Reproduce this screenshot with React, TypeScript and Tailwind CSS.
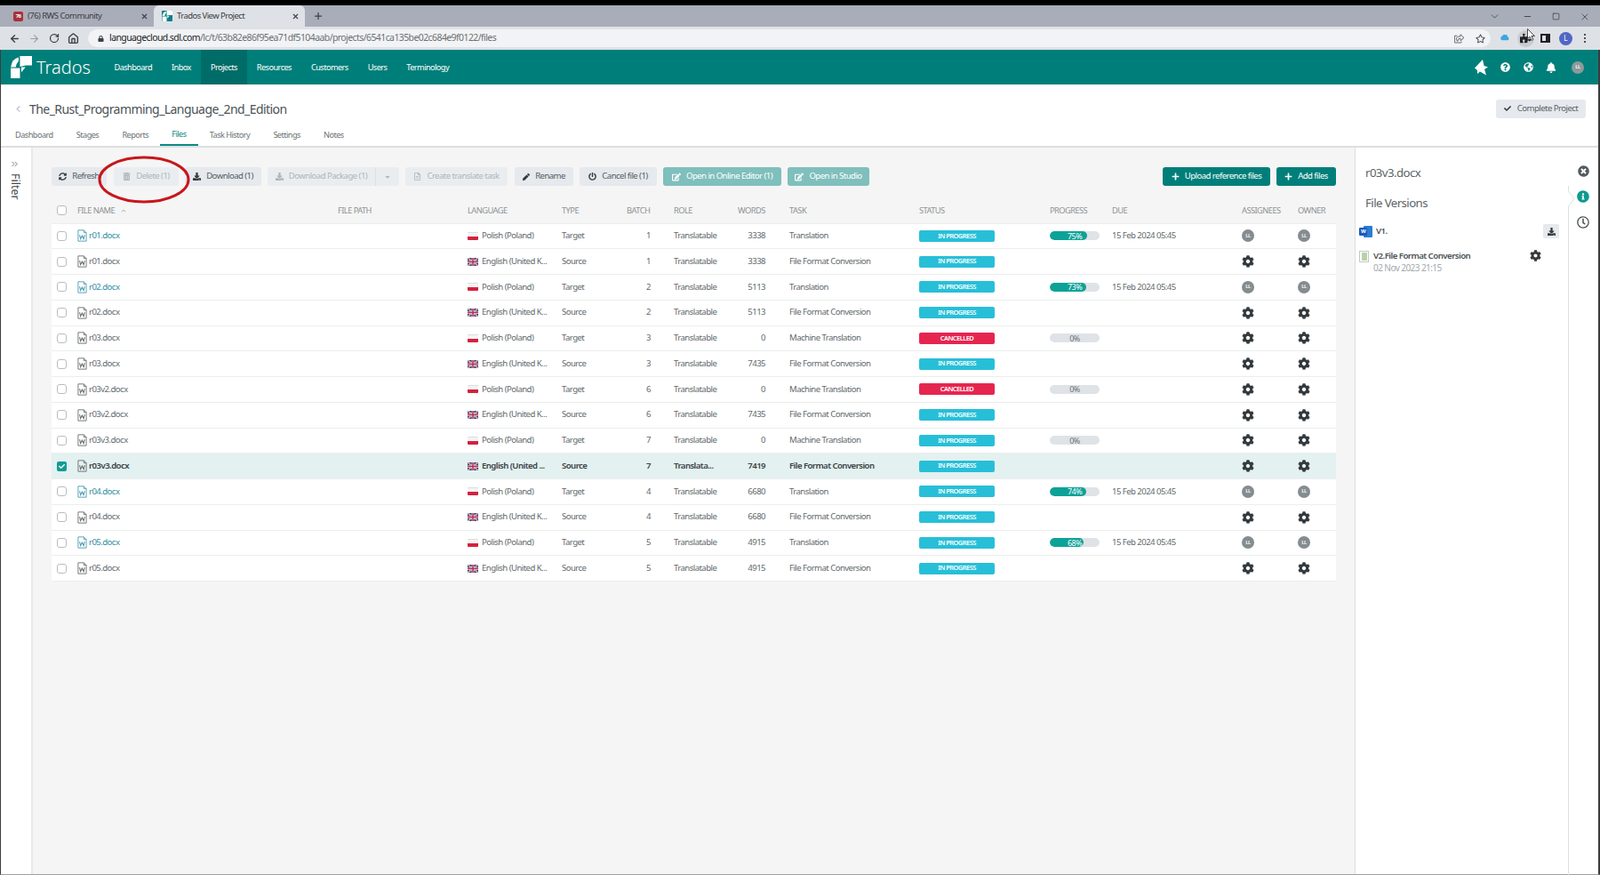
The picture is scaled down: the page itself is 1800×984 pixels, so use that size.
import { ReactNode } from "react";
import {
  FaBell,
  FaCheck,
  FaCog,
  FaDownload,
  FaEdit,
  FaGlobeAmericas,
  FaInfoCircle,
  FaLock,
  FaPen,
  FaPlus,
  FaPowerOff,
  FaPuzzlePiece,
  FaQuestionCircle,
  FaRegClock,
  FaRegFileAlt,
  FaRegShareSquare,
  FaRegStar,
  FaSyncAlt,
  FaTimesCircle,
  FaTrashAlt,
  FaCaretDown,
} from "react-icons/fa";
import { ArrowLeft, ArrowRight, ChevronDown, ChevronLeft, ChevronsRight, ChevronUp, Home, Minus, Plus, RotateCw, Square, X } from "lucide-react";

type FileRow = {
  name: string;
  link?: boolean;
  target: boolean;
  batch: number;
  words: number;
  task: string;
  status: "IN PROGRESS" | "CANCELLED";
  progress?: number;
  due?: boolean;
  user?: boolean;
  selected?: boolean;
};

const rows: FileRow[] = [
  { name: "r01.docx", link: true, target: true, batch: 1, words: 3338, task: "Translation", status: "IN PROGRESS", progress: 75, due: true, user: true },
  { name: "r01.docx", target: false, batch: 1, words: 3338, task: "File Format Conversion", status: "IN PROGRESS" },
  { name: "r02.docx", link: true, target: true, batch: 2, words: 5113, task: "Translation", status: "IN PROGRESS", progress: 73, due: true, user: true },
  { name: "r02.docx", target: false, batch: 2, words: 5113, task: "File Format Conversion", status: "IN PROGRESS" },
  { name: "r03.docx", target: true, batch: 3, words: 0, task: "Machine Translation", status: "CANCELLED", progress: 0 },
  { name: "r03.docx", target: false, batch: 3, words: 7435, task: "File Format Conversion", status: "IN PROGRESS" },
  { name: "r03v2.docx", target: true, batch: 6, words: 0, task: "Machine Translation", status: "CANCELLED", progress: 0 },
  { name: "r03v2.docx", target: false, batch: 6, words: 7435, task: "File Format Conversion", status: "IN PROGRESS" },
  { name: "r03v3.docx", target: true, batch: 7, words: 0, task: "Machine Translation", status: "IN PROGRESS", progress: 0 },
  { name: "r03v3.docx", target: false, batch: 7, words: 7419, task: "File Format Conversion", status: "IN PROGRESS", selected: true },
  { name: "r04.docx", link: true, target: true, batch: 4, words: 6680, task: "Translation", status: "IN PROGRESS", progress: 74, due: true, user: true },
  { name: "r04.docx", target: false, batch: 4, words: 6680, task: "File Format Conversion", status: "IN PROGRESS" },
  { name: "r05.docx", link: true, target: true, batch: 5, words: 4915, task: "Translation", status: "IN PROGRESS", progress: 68, due: true, user: true },
  { name: "r05.docx", target: false, batch: 5, words: 4915, task: "File Format Conversion", status: "IN PROGRESS" },
];

const gridCols =
  "grid grid-cols-[29px_293px_146px_106px_73px_53px_72px_58px_146px_147px_70px_146px_63px_43px] items-center";

function TradosMark({ className }: { className?: string }) {
  return (
    <svg viewBox="0 0 24 24" className={className} fill="white">
      <path d="M11 0H24V10H17.5L11 11.5z" />
      <path d="M1 12L3 5.5Q6 2.5 9.5 1.5V5.5Q7 8 6.5 12z" />
      <path d="M1 13H11V24H1z" />
      <path d="M12.5 12H17L12.5 17.5z" />
    </svg>
  );
}

function WordFileIcon({ color }: { color: string }) {
  return (
    <svg viewBox="0 0 12 15" className="h-[14px] w-[11px] shrink-0" fill="none" stroke={color} strokeWidth="1">
      <path d="M1 .8h7l3 3v10.4H1z" />
      <path d="M8 .8v3h3" />
      <path d="M2.8 6.5 4 11.5l1.9-4 1.9 4 1.2-5" strokeWidth="1.1" />
    </svg>
  );
}

function PolishFlag() {
  return (
    <span className="flex h-[9px] w-[12px] shrink-0 flex-col overflow-hidden rounded-[1px] border-t border-[#ddd]">
      <span className="h-1/2 bg-[#f4f4f4]" />
      <span className="h-1/2 bg-[#d4213d]" />
    </span>
  );
}

function UkFlag() {
  return (
    <svg viewBox="0 0 24 18" className="h-[9px] w-[12px] shrink-0 rounded-[1px]">
      <rect width="24" height="18" fill="#27356f" />
      <path d="M0 0l24 18M24 0L0 18" stroke="#e8e0e8" strokeWidth="3.5" />
      <path d="M0 0l24 18M24 0L0 18" stroke="#b3304d" strokeWidth="1.2" />
      <path d="M12 0v18M0 9h24" stroke="#e8e0e8" strokeWidth="5.5" />
      <path d="M12 0v18M0 9h24" stroke="#b3304d" strokeWidth="3" />
    </svg>
  );
}

function Avatar() {
  return (
    <span className="flex h-[14px] w-[14px] items-center justify-center rounded-full bg-[#848c8f] text-[6px] font-semibold text-white">
      LL
    </span>
  );
}

function ToolButton({
  icon,
  label,
  className,
}: {
  icon: ReactNode;
  label: string;
  className: string;
}) {
  return (
    <div className={`flex h-[21px] items-center justify-center gap-[6px] rounded-[3px] text-[9.6px] ${className}`}>
      {icon}
      <span>{label}</span>
    </div>
  );
}

function Row({ row }: { row: FileRow }) {
  const textColor = row.selected ? "text-[#3b4245] font-semibold" : "text-[#636a6d]";
  return (
    <div
      className={`${gridCols} h-[28.75px] border-b border-[#eceeee] text-[9.6px] ${textColor} ${
        row.selected ? "bg-[#e3f1f0]" : "bg-white"
      }`}
    >
      <div className="pl-[6px]">
        {row.selected ? (
          <span className="flex h-[11px] w-[11px] items-center justify-center rounded-[2px] bg-[#0d9d94]">
            <FaCheck className="text-[7px] text-white" />
          </span>
        ) : (
          <span className="block h-[11px] w-[11px] rounded-[3px] border border-[#b9bdbf] bg-white" />
        )}
      </div>
      <div className="flex items-center gap-[2px]">
        <WordFileIcon color={row.link ? "#4d9fb4" : "#6b6f72"} />
        <span className={row.link ? "text-[#2f8ea3]" : ""}>{row.name}</span>
      </div>
      <div />
      <div className="flex items-center gap-[4px]">
        {row.target ? <PolishFlag /> : <UkFlag />}
        <span className="whitespace-nowrap">
          {row.target ? "Polish (Poland)" : row.selected ? "English (United ..." : "English (United K..."}
        </span>
      </div>
      <div>{row.target ? "Target" : "Source"}</div>
      <div className="pr-[26px] text-right">{row.batch}</div>
      <div>{row.selected ? "Translata..." : "Translatable"}</div>
      <div className="pr-[27px] text-right">{row.words}</div>
      <div>{row.task}</div>
      <div>
        <span
          className={`flex h-[13px] w-[85px] items-center justify-center rounded-[2px] text-[7.5px] font-semibold leading-none text-white ${
            row.status === "CANCELLED" ? "bg-[#e6254f]" : "bg-[#27bfd8]"
          }`}
        >
          {row.status}
        </span>
      </div>
      <div>
        {row.progress !== undefined && (
          <div className="relative h-[10px] w-[56px] overflow-hidden rounded-full bg-[#dfe3e7]">
            <div className="absolute inset-y-0 left-0 rounded-full bg-[#0ca297]" style={{ width: `${row.progress}%` }} />
            <span
              className={`absolute inset-0 flex items-center justify-center text-[9px] leading-none ${
                row.progress ? "text-white" : "text-[#6c7376]"
              }`}
            >
              {row.progress}%
            </span>
          </div>
        )}
      </div>
      <div>{row.due ? "15 Feb 2024 05:45" : ""}</div>
      <div>{row.user ? <Avatar /> : <FaCog className="text-[14px] text-[#33393c]" />}</div>
      <div>{row.user ? <Avatar /> : <FaCog className="text-[14px] text-[#33393c]" />}</div>
    </div>
  );
}

function ChromeBar() {
  return (
    <div className="shrink-0">
      <div className="h-[6px] bg-black" />
      <div className="flex h-[24px] items-end bg-[#a9adb9] pl-[3px] text-[9.5px] text-[#3c4043]">
        <div className="flex h-[24px] w-[170px] items-center rounded-t-[6px] pl-[12px]">
          <span className="mr-[5px] flex h-[11px] w-[11px] items-center justify-center rounded-[2px] bg-[#a8303a] text-[6px] font-bold text-white">
            76
          </span>
          <span className="flex-1">(76) RWS Community</span>
          <X className="mr-[6px] h-[9px] w-[9px]" strokeWidth={3} />
        </div>
        <div className="flex h-[24px] w-[170px] items-center rounded-t-[6px] bg-[#dee1e6] pl-[9px]">
          <TradosMark className="mr-[5px] h-[12px] w-[12px] rounded-[1px] bg-[#0a7f86]" />
          <span className="flex-1">Trados View Project</span>
          <X className="mr-[6px] h-[9px] w-[9px]" strokeWidth={3} />
        </div>
        <Plus className="mb-[6px] ml-[9px] h-[12px] w-[12px]" strokeWidth={2.5} />
        <div className="ml-auto mb-[5px] flex items-center text-[#3c4043]">
          <ChevronDown className="mr-[25px] h-[13px] w-[13px]" strokeWidth={1.5} />
          <Minus className="mr-[22px] h-[11px] w-[11px]" strokeWidth={2} />
          <Square className="mr-[22px] h-[9px] w-[9px]" strokeWidth={2} />
          <X className="mr-[11px] h-[12px] w-[12px]" strokeWidth={1.5} />
        </div>
      </div>
      <div className="flex h-[26px] items-center bg-[#dee1e6] pl-[10px] text-[#3c4043]">
        <ArrowLeft className="h-[13px] w-[13px]" strokeWidth={2.5} />
        <ArrowRight className="ml-[9px] h-[13px] w-[13px] text-[#9aa0a6]" strokeWidth={2} />
        <RotateCw className="ml-[10px] h-[12px] w-[12px]" strokeWidth={2.5} />
        <Home className="ml-[9px] h-[13px] w-[13px]" strokeWidth={2.5} />
        <div className="ml-[10px] flex h-[20px] w-[1578px] items-center rounded-full bg-[#f1f3f4] pl-[11px] pr-[6px] text-[10.45px]">
          <FaLock className="mr-[6px] text-[7px]" />
          <span className="text-[#202124]">languagecloud.sdl.com</span>
          <span className="text-[#6c7073]">/lc/t/63b82e86f95ea71df5104aab/projects/6541ca135be02c684e9f0122/files</span>
          <FaRegShareSquare className="ml-auto mr-[13px] text-[11px] text-[#6c7073]" />
          <FaRegStar className="text-[11px]" />
        </div>
        <svg viewBox="0 0 14 10" className="ml-[10px] h-[9px] w-[12px]" fill="#3ea6e0">
          <path d="M3 7a3 3 0 0 1 .6-5.6A4 4 0 0 1 11 3a2.2 2.2 0 0 1 0 4z" />
        </svg>
        <div className="ml-[7.5px] flex h-[19px] w-[19px] items-center justify-center rounded-full bg-[#c9ccd1]">
          <FaPuzzlePiece className="text-[12px] text-[#202124]" />
        </div>
        <div className="ml-[7px] h-[10px] w-[11px] border-[2px] border-r-[5px] border-[#202124]" />
        <div className="ml-[10px] flex h-[15px] w-[15px] items-center justify-center rounded-full bg-[#5166c4] text-[8px] text-white">
          L
        </div>
        <div className="ml-[13.5px] flex flex-col gap-[2px]">
          <span className="h-[2px] w-[2px] rounded-full bg-[#202124]" />
          <span className="h-[2px] w-[2px] rounded-full bg-[#202124]" />
          <span className="h-[2px] w-[2px] rounded-full bg-[#202124]" />
        </div>
      </div>
    </div>
  );
}

function TopNav() {
  const items = ["Dashboard", "Inbox", "Projects", "Resources", "Customers", "Users", "Terminology"];
  return (
    <div className="flex h-[39px] shrink-0 items-center bg-[#007f7a] pl-[10px] text-white">
      <TradosMark className="h-[25px] w-[25px]" />
      <span className="ml-[5px] text-[20px] font-light leading-none tracking-normal">Trados</span>
      <div className="ml-[15.5px] flex h-full items-center text-[9.2px]">
        {items.map((item) => (
          <div
            key={item}
            className={`flex h-full items-center px-[11px] ${item === "Projects" ? "bg-[#006c68]" : ""}`}
          >
            {item}
          </div>
        ))}
      </div>
      <div className="ml-auto mr-[16px] flex items-center">
        <svg viewBox="0 0 15 18" className="h-[18px] w-[15px]" fill="white">
          <path d="M9 0l1.5 7 4.5 1.5L11 11l2 6.5-7-4-3 2.5v-4L0 9.5z" />
        </svg>
        <FaQuestionCircle className="ml-[14px] text-[11px]" />
        <FaGlobeAmericas className="ml-[15px] text-[11px]" />
        <FaBell className="ml-[14.5px] text-[12px]" />
        <span className="ml-[17px] flex h-[14px] w-[14px] items-center justify-center rounded-full bg-[#8b9a9b] text-[6px] font-semibold">
          LL
        </span>
      </div>
    </div>
  );
}

function ProjectHeader() {
  const tabs = ["Dashboard", "Stages", "Reports", "Files", "Task History", "Settings", "Notes"];
  return (
    <div className="h-[71px] shrink-0 border-b-2 border-[#dcdfe0] bg-white">
      <div className="flex h-[45px] items-center pl-[14px] pr-[14px] pt-[9px]">
        <ChevronLeft className="h-[11px] w-[11px] text-[#5d6366]" strokeWidth={1.5} />
        <span className="ml-[7px] text-[14px] text-[#4b5255]">The_Rust_Programming_Language_2nd_Edition</span>
        <div className="ml-auto flex h-[21px] w-[101px] items-center justify-center gap-[7px] rounded-[3px] bg-[#e6e9ed] text-[9.6px] text-[#5a6164]">
          <FaCheck className="text-[8px] text-[#33393c]" />
          Complete Project
        </div>
      </div>
      <div className="flex h-[24px] items-stretch pl-[3px] text-[9.2px] text-[#6b7275]">
        {tabs.map((tab) => (
          <div
            key={tab}
            className={`flex items-center px-[13.1px] ${tab === "Files" ? "border-b-2 border-[#0a8a84] text-[#0a8a84]" : ""}`}
          >
            {tab}
          </div>
        ))}
      </div>
    </div>
  );
}

function Toolbar() {
  const off = "bg-[#eaedf0] text-[#b0b5b8]";
  const on = "bg-[#e6e9ed] text-[#555c60]";
  const teal = "bg-[#7fbfbc] text-white";
  const strong = "bg-[#007f7a] text-white";
  return (
    <div className="flex items-center pt-[22px]">
      <ToolButton className={`${on} mr-[8px] w-[62px]`} icon={<FaSyncAlt className="text-[9px] text-[#33393c]" />} label="Refresh" />
      <ToolButton className={`${off} mr-[7px] w-[73px]`} icon={<FaTrashAlt className="text-[9px]" />} label="Delete (1)" />
      <ToolButton className={`${on} mr-[7px] w-[86px]`} icon={<FaDownload className="text-[9px] text-[#33393c]" />} label="Download (1)" />
      <div className={`mr-[7px] flex h-[21px] w-[148px] items-center rounded-[3px] text-[9.6px] ${off}`}>
        <div className="flex h-full flex-1 items-center justify-center gap-[6px] border-r border-[#dde0e3]">
          <FaDownload className="text-[9px]" />
          Download Package (1)
        </div>
        <FaCaretDown className="mx-[9px] text-[8px]" />
      </div>
      <ToolButton className={`${off} mr-[8px] w-[115px]`} icon={<FaRegFileAlt className="text-[9px]" />} label="Create translate task" />
      <ToolButton className={`${on} mr-[7px] w-[66px]`} icon={<FaPen className="text-[8px] text-[#33393c]" />} label="Rename" />
      <ToolButton className={`${on} mr-[7px] w-[87px]`} icon={<FaPowerOff className="text-[9px] text-[#33393c]" />} label="Cancel file (1)" />
      <ToolButton className={`${teal} mr-[7px] w-[133px]`} icon={<FaEdit className="text-[10px]" />} label="Open in Online Editor (1)" />
      <ToolButton className={`${teal} w-[92px]`} icon={<FaEdit className="text-[10px]" />} label="Open in Studio" />
      <ToolButton className={`${strong} ml-auto mr-[7px] w-[121px]`} icon={<FaPlus className="text-[9px]" />} label="Upload reference files" />
      <ToolButton className={`${strong} w-[67px]`} icon={<FaPlus className="text-[9px]" />} label="Add files" />
    </div>
  );
}

function FileTable() {
  return (
    <div className="mt-[13.5px]">
      <div className={`${gridCols} h-[28px] text-[9.3px] text-[#8d9395]`}>
        <div className="pl-[6px]">
          <span className="block h-[11px] w-[11px] rounded-[3px] border border-[#b9bdbf] bg-white" />
        </div>
        <div className="flex items-center gap-[6px]">
          FILE NAME <ChevronUp className="h-[8px] w-[8px]" strokeWidth={2} />
        </div>
        <div>FILE PATH</div>
        <div>LANGUAGE</div>
        <div>TYPE</div>
        <div>BATCH</div>
        <div>ROLE</div>
        <div>WORDS</div>
        <div>TASK</div>
        <div>STATUS</div>
        <div>PROGRESS</div>
        <div>DUE</div>
        <div>ASSIGNEES</div>
        <div>OWNER</div>
      </div>
      <div className="border-t border-[#eceeee]">
        {rows.map((row, i) => (
          <Row key={i} row={row} />
        ))}
      </div>
    </div>
  );
}

function DetailsPanel() {
  return (
    <aside className="flex w-[274px] shrink-0 border-l border-[#dcdfe0] bg-white">
      <div className="w-[239px]">
        <div className="pl-[11px] pt-[19px] text-[13.2px] leading-[18px] text-[#5c6366]">r03v3.docx</div>
        <div className="pl-[11px] pt-[16px] text-[13.2px] leading-[18px] text-[#5c6366]">File Versions</div>
        <div className="mt-[15.5px] flex h-[15px] items-center pl-[4px] pr-[10px]">
          <span className="relative h-[13px] w-[15px] shrink-0">
            <span className="absolute inset-y-0 left-[5px] right-0 rounded-[1px] bg-[#2b7cd3]" />
            <span className="absolute left-0 top-[2px] flex h-[9px] w-[9px] items-center justify-center rounded-[1px] bg-[#185abd] text-[6px] font-bold leading-none text-white">
              W
            </span>
          </span>
          <span className="ml-[4px] text-[9.6px] font-semibold text-[#4b5255]">V1.</span>
          <span className="ml-auto flex h-[16px] w-[18px] items-center justify-center rounded-[2px] bg-[#e6e9ed]">
            <FaDownload className="text-[9px] text-[#33393c]" />
          </span>
        </div>
        <div className="mt-[13px] flex items-start pl-[4px] pr-[30px]">
          <span className="mt-[1px] flex h-[13px] w-[11px] items-center justify-center border border-[#c3c7c9] bg-white">
            <span className="h-[9px] w-[6px] bg-[#b7d3a6]" />
          </span>
          <div className="ml-[5px]">
            <div className="text-[9.7px] font-semibold leading-[13px] text-[#4b5255]">V2.File Format Conversion</div>
            <div className="mt-[1px] text-[10px] leading-[13px] text-[#a4a9ab]">02 Nov 2023 21:15</div>
          </div>
          <FaCog className="ml-auto text-[13px] text-[#33393c]" />
        </div>
      </div>
      <div className="relative flex flex-1 flex-col items-center gap-[15px] pt-[20px]">
        <svg className="absolute left-0 top-[43px] h-[800px] w-[8px]" viewBox="0 0 8 800" fill="none" stroke="#dcdfe0">
          <path d="M.5 0v6L7 14.5.5 23V800" />
        </svg>
        <FaTimesCircle className="text-[13px] text-[#555b5e]" />
        <FaInfoCircle className="text-[14px] text-[#0c9a90]" />
        <FaRegClock className="text-[14px] text-[#4b5255]" />
      </div>
    </aside>
  );
}

export default function App() {
  return (
    <div className="relative flex h-[984px] w-[1800px] flex-col overflow-hidden bg-white font-['Open_Sans',sans-serif] tracking-[-0.035em]">
      <ChromeBar />
      <div className="flex min-h-0 flex-1 flex-col border-b border-l border-r-2 border-b-[#a0a0a0] border-l-[#3c3c3c] border-r-[#3c3c3c]">
        <TopNav />
        <ProjectHeader />
        <div className="flex min-h-0 flex-1">
          <div className="w-[36px] shrink-0 border-r-2 border-[#e8e8e8] bg-white pt-[13px] text-[#444a4d]">
            <ChevronsRight className="ml-[10px] h-[11px] w-[11px]" strokeWidth={1.5} />
            <div className="ml-[9px] mt-[5px] text-[12.5px] leading-none tracking-normal [writing-mode:vertical-rl]">Filter</div>
          </div>
          <main className="min-w-0 flex-1 bg-[#f5f5f5] pl-[21px] pr-[21px]">
            <Toolbar />
            <FileTable />
          </main>
          <DetailsPanel />
        </div>
      </div>
      <svg className="pointer-events-none absolute left-[110px] top-[175px] h-[54px] w-[104px]" viewBox="0 0 104 54" fill="none">
        <ellipse cx="52" cy="27" rx="50" ry="25" stroke="#c8161d" strokeWidth="3" />
      </svg>
      <svg className="pointer-events-none absolute left-[1718px] top-[32px] h-[14px] w-[9px]" viewBox="0 0 9 14" fill="white" stroke="#222" strokeWidth="0.8">
        <path d="M.5.5v11l2.6-2.3 1.8 4.2 1.8-.8-1.8-4.1H8.5z" />
      </svg>
    </div>
  );
}
